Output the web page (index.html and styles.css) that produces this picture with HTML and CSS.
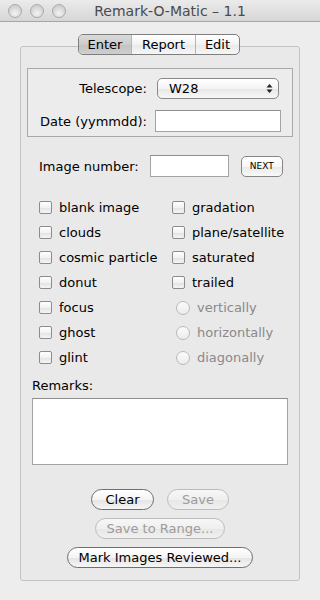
FILE: index.html
```html
<!DOCTYPE html>
<html>

<head>
    <title>Remark-O-Matic - 1.1</title>
    <link rel="stylesheet" href="styles.css">
</head>

<body>
    <div class="titlebar">
        <div class="lights">
            <span class="light"></span>
            <span class="light"></span>
            <span class="light"></span>
        </div>
        <div class="title">Remark-O-Matic – 1.1</div>
    </div>

    <div class="panel">
        <div class="tabs">
            <div class="tab selected">Enter</div>
            <div class="tab">Report</div>
            <div class="tab">Edit</div>
        </div>

        <div class="group">
            <div class="row">
                <label class="label">Telescope:</label>
                <div class="popup">
                    <span>W28</span>
                    <svg class="arrows" width="7" height="11" viewBox="0 0 7 11">
                        <path d="M3.5 1 L6.5 4.5 L0.5 4.5 Z" fill="#222"/>
                        <path d="M3.5 10 L6.5 6.5 L0.5 6.5 Z" fill="#222"/>
                    </svg>
                </div>
            </div>
            <div class="row">
                <label class="label">Date (yymmdd):</label>
                <input type="text" class="field date">
            </div>
        </div>

        <div class="image-row">
            <label>Image number:</label>
            <input type="text" class="field number">
            <button class="next">NEXT</button>
        </div>

        <div class="checks">
            <div class="col">
                <div class="check"><span class="box"></span>blank image</div>
                <div class="check"><span class="box"></span>clouds</div>
                <div class="check"><span class="box"></span>cosmic particle</div>
                <div class="check"><span class="box"></span>donut</div>
                <div class="check"><span class="box"></span>focus</div>
                <div class="check"><span class="box"></span>ghost</div>
                <div class="check"><span class="box"></span>glint</div>
            </div>
            <div class="col">
                <div class="check"><span class="box"></span>gradation</div>
                <div class="check"><span class="box"></span>plane/satellite</div>
                <div class="check"><span class="box"></span>saturated</div>
                <div class="check"><span class="box"></span>trailed</div>
                <div class="check radio"><span class="dot"></span>vertically</div>
                <div class="check radio"><span class="dot"></span>horizontally</div>
                <div class="check radio"><span class="dot"></span>diagonally</div>
            </div>
        </div>

        <div class="remarks">
            <label>Remarks:</label>
            <textarea class="field"></textarea>
        </div>

        <div class="buttons">
            <div class="btn-row">
                <button class="pill clear">Clear</button>
                <button class="pill save" disabled>Save</button>
            </div>
            <div class="btn-row">
                <button class="pill range" disabled>Save to Range...</button>
            </div>
            <div class="btn-row">
                <button class="pill mark">Mark Images Reviewed...</button>
            </div>
        </div>
    </div>
</body>

</html>
```

FILE: styles.css
```css
body {
    margin: 0;
    width: 320px;
    height: 600px;
    background-color: #ededed;
    font-family: "DejaVu Sans", "Liberation Sans", sans-serif;
    font-size: 12px;
    color: #000;
    overflow: hidden;
}

.titlebar {
    height: 21px;
    border-bottom: 1px solid #a6a6a6;
    background: linear-gradient(#ebebeb, #d6d6d6);
    display: flex;
    align-items: center;
}

.lights {
    display: flex;
    gap: 8px;
    padding-left: 8px;
}

.light {
    width: 12px;
    height: 12px;
    border-radius: 50%;
    border: 1px solid #a9a9a9;
    background: radial-gradient(circle at 50% 70%, #f4f4f4, #d0d0d0 70%);
}

.title {
    flex: 1;
    text-align: center;
    margin-left: -46px;
    font-size: 14px;
    color: #4a4a4a;
}

.panel {
    margin: 24px 0 0 20px;
    width: 280px;
    height: 535px;
    border: 1px solid #c3c3c3;
    border-radius: 3px;
    background-color: #e9e9e9;
    padding: 0 6px;
    box-sizing: border-box;
}

.tabs {
    display: flex;
    width: 162px;
    height: 21px;
    margin: -13px 0 0 51px;
    border: 1px solid #7f7f7f;
    border-radius: 5px;
    box-sizing: border-box;
    overflow: hidden;
    background: linear-gradient(#ffffff, #f3f3f3 50%, #e9e9e9 51%, #f6f6f6);
}

.tab {
    display: flex;
    align-items: center;
    justify-content: center;
    font-size: 13px;
    border-left: 1px solid #b5b5b5;
}

.tab:nth-child(1) {
    width: 52px;
    border-left: none;
}

.tab:nth-child(2) {
    width: 63px;
}

.tab:nth-child(3) {
    flex: 1;
}

.tab.selected {
    background: linear-gradient(#d9d9d9, #cdcdcd 50%, #c2c2c2 51%, #cfcfcf);
}

.group {
    margin-top: 13px;
    height: 69px;
    border: 1px solid #a9a9a9;
    background-color: #ececec;
    box-sizing: border-box;
    padding-top: 8px;
}

.row {
    display: flex;
    align-items: center;
    height: 22px;
    margin-bottom: 11px;
}

.label {
    width: 119px;
    text-align: right;
    font-size: 13px;
}

.popup {
    margin-left: 10px;
    width: 122px;
    height: 21px;
    box-sizing: border-box;
    border: 1px solid #8a8a8a;
    border-radius: 5px;
    background: linear-gradient(#ffffff, #f4f4f4 50%, #e6e6e6 51%, #f8f8f8);
    display: flex;
    align-items: center;
    justify-content: space-between;
    padding: 0 5px 0 11px;
    font-size: 13px;
}

.field {
    box-sizing: border-box;
    border: 1px solid #a3a3a3;
    border-top-color: #8e8e8e;
    background-color: #fff;
    font-family: inherit;
    margin: 0;
    padding: 0;
}

.date {
    margin-left: 8px;
    width: 126px;
    height: 22px;
}

.image-row {
    display: flex;
    align-items: center;
    margin-top: 18px;
    padding-left: 12px;
    font-size: 13px;
}

.number {
    margin-left: 11px;
    width: 79px;
    height: 22px;
}

.next {
    margin-left: 12px;
    width: 42px;
    height: 21px;
    border: 1px solid #858585;
    border-radius: 5px;
    background: linear-gradient(#ffffff, #f6f6f6 50%, #e8e8e8 51%, #f9f9f9);
    font-family: inherit;
    font-size: 9px;
    padding: 0;
    color: #000;
}

.checks {
    display: flex;
    margin-top: 18px;
    padding-left: 12px;
}

.col {
    display: flex;
    flex-direction: column;
}

.col:first-child {
    width: 133px;
}

.check {
    display: flex;
    align-items: center;
    height: 25px;
    font-size: 13px;
}

.box {
    width: 13px;
    height: 13px;
    box-sizing: border-box;
    border: 1px solid #8c8c8c;
    border-radius: 2px;
    background: linear-gradient(#ffffff, #f2f2f2 50%, #e2e2e2 51%, #f5f5f5);
    margin-right: 7px;
}

.radio {
    color: #8a8a8a;
    padding-left: 4px;
}

.dot {
    width: 14px;
    height: 14px;
    box-sizing: border-box;
    border: 1px solid #b9b9b9;
    border-radius: 50%;
    background: linear-gradient(#fbfbfb, #ececec);
    margin-right: 7px;
}

.remarks {
    margin-top: 8px;
    padding-left: 5px;
    font-size: 13px;
}

.remarks textarea {
    display: block;
    margin-top: 5px;
    width: 256px;
    height: 67px;
    resize: none;
}

.buttons {
    display: flex;
    flex-direction: column;
    align-items: center;
    gap: 8px;
    margin-top: 24px;
}

.btn-row {
    display: flex;
    gap: 13px;
}

.pill {
    height: 21px;
    box-sizing: border-box;
    border: 1px solid #6f6f6f;
    border-radius: 11px;
    background: linear-gradient(#ffffff, #f4f4f4 50%, #e4e4e4 51%, #f6f6f6);
    font-family: inherit;
    font-size: 13px;
    color: #000;
    padding: 0;
}

.pill:disabled {
    border-color: #bcbcbc;
    color: #9c9c9c;
    background: linear-gradient(#f7f7f7, #efefef 50%, #e7e7e7 51%, #f0f0f0);
}

.clear {
    width: 63px;
}

.save {
    width: 62px;
}

.range {
    width: 130px;
}

.mark {
    width: 186px;
}
```
